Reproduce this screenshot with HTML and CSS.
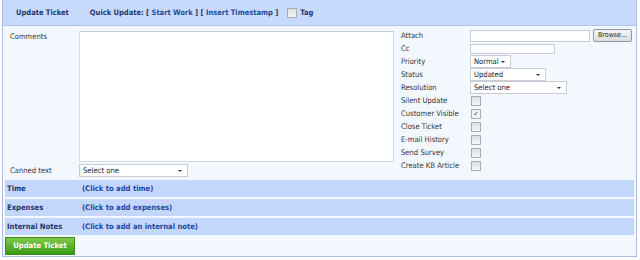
FILE: index.html
```html
<!DOCTYPE html>
<html>
<head>
<meta charset="utf-8">
<link rel="stylesheet" href="styles.css">
</head>
<body>
<div class="panel">
  <div class="head">
    <span class="head-title">Update Ticket</span>
    <span class="quick">Quick Update: [ <span class="qlink">Start Work</span> ] [ <span class="qlink">Insert Timestamp</span> ]</span>
    <span class="cb"></span>
    <span class="tag">Tag</span>
  </div>
  <div class="main">
    <div class="left">
      <div class="lrow comments-row">
        <span class="lab">Comments</span>
        <div class="textarea"></div>
      </div>
      <div class="lrow canned-row">
        <span class="lab">Canned text</span>
        <div class="sel sel-canned">Select one<span class="arr"></span></div>
      </div>
    </div>
    <div class="right">
      <span class="lab">Attach</span>
      <div class="field attach"><div class="input in-attach"></div><div class="browse">Browse...</div></div>
      <span class="lab">Cc</span>
      <div class="field"><div class="input in-cc"></div></div>
      <span class="lab">Priority</span>
      <div class="field"><div class="sel sel-pri">Normal<span class="arr"></span></div></div>
      <span class="lab">Status</span>
      <div class="field"><div class="sel sel-status">Updated<span class="arr"></span></div></div>
      <span class="lab">Resolution</span>
      <div class="field"><div class="sel sel-res">Select one<span class="arr"></span></div></div>
      <span class="lab">Silent Update</span>
      <div class="field"><span class="cb"></span></div>
      <span class="lab">Customer Visible</span>
      <div class="field"><span class="cb checked">✓</span></div>
      <span class="lab">Close Ticket</span>
      <div class="field"><span class="cb"></span></div>
      <span class="lab">E-mail History</span>
      <div class="field"><span class="cb"></span></div>
      <span class="lab">Send Survey</span>
      <div class="field"><span class="cb"></span></div>
      <span class="lab">Create KB Article</span>
      <div class="field"><span class="cb"></span></div>
    </div>
  </div>
  <div class="bar"><span class="bar-title">Time</span><span class="bar-link">(Click to add time)</span></div>
  <div class="bar"><span class="bar-title">Expenses</span><span class="bar-link">(Click to add expenses)</span></div>
  <div class="bar"><span class="bar-title">Internal Notes</span><span class="bar-link">(Click to add an internal note)</span></div>
  <div class="foot"><div class="btn">Update Ticket</div></div>
</div>
</body>
</html>
```

FILE: styles.css
```css
html, body {
  margin: 0;
  padding: 0;
  background: #ffffff;
}
body {
  padding: 0 3px 0 2px;
  font-family: "DejaVu Sans Condensed", "DejaVu Sans", sans-serif;
  font-size: 8px;
  color: #333333;
}
.panel {
  width: 633px;
  height: 256px;
  border: 1px solid #a9bfe8;
  border-top: none;
  background: #f3f7fe;
  display: flex;
  flex-direction: column;
}
.head {
  height: 25px;
  background: #c8dafc;
  border-bottom: 1px solid #adc3ec;
  display: flex;
  align-items: center;
  font-weight: bold;
  font-size: 7.5px;
  color: #1c3671;
}
.head-title { margin-left: 13px; }
.quick { margin-left: 21px; }
.qlink { color: #214aa0; }
.head .cb { margin-left: 9px; }
.tag { margin-left: 3px; }

.cb {
  display: inline-block;
  width: 8px;
  height: 8px;
  border: 1px solid #a8adb5;
  background: linear-gradient(#dcdfe3, #f4f5f6);
  font-size: 7px;
  line-height: 8px;
  text-align: center;
  color: #2c3c7a;
}
.cb.checked { background: #f3f4f6; }

.main {
  display: flex;
  padding-top: 3px;
  height: 149px;
}
.left {
  display: flex;
  flex-direction: column;
  gap: 2px;
  padding-top: 2px;
}
.lrow {
  display: flex;
}
.lab {
  display: block;
  font-size: 7.6px;
  color: #333333;
}
.left .lab {
  width: 69px;
  padding-left: 7px;
}
.comments-row .lab { padding-top: 1px; }
.textarea {
  width: 313px;
  height: 129px;
  background: #ffffff;
  border: 1px solid #d3dae6;
  border-top-color: #c4ccdb;
}
.canned-row { align-items: center; }
.sel {
  position: relative;
  box-sizing: border-box;
  height: 13px;
  background: #ffffff;
  border: 1px solid #c7ccd6;
  padding-left: 3px;
  font-size: 7.6px;
  line-height: 11px;
  color: #222222;
}
.arr {
  position: absolute;
  right: 5px;
  top: 5px;
  width: 0;
  height: 0;
  border-left: 2px solid transparent;
  border-right: 2px solid transparent;
  border-top: 2px solid #333333;
}
.sel-canned { width: 109px; }
.sel-pri { width: 41px; }
.sel-status { width: 76px; }
.sel-res { width: 97px; }

.right {
  margin-left: 6px;
  display: grid;
  grid-template-columns: 70px 170px;
  grid-auto-rows: 13px;
  align-items: center;
}
.right .lab { padding-left: 1px; }
.field {
  display: flex;
  align-items: center;
}
.input {
  box-sizing: border-box;
  background: #ffffff;
  border: 1px solid #c7ccd6;
}
.in-attach { width: 120px; height: 12px; }
.in-cc { width: 85px; height: 10px; }
.browse {
  margin-left: 3px;
  box-sizing: border-box;
  width: 39px;
  height: 13px;
  border: 1px solid #8f959c;
  border-radius: 2px;
  background: linear-gradient(#f6f6f6, #dcdcdc);
  font-size: 7px;
  line-height: 11px;
  text-align: center;
  color: #222222;
}
.field .cb { margin-left: 1px; }

.bar {
  margin: 2px 2px 0 2px;
  height: 17px;
  background: #c3d6fb;
  display: flex;
  align-items: center;
  font-weight: bold;
  font-size: 7.6px;
}
.bar-title {
  width: 75px;
  padding-left: 2px;
  color: #1c3671;
}
.bar-link { color: #1f48a0; }
.foot {
  padding: 2px 0 0 2px;
}
.btn {
  box-sizing: border-box;
  width: 70px;
  height: 18px;
  background: linear-gradient(#7ccb4a, #3d9817);
  border: 1px solid #3c8b1c;
  color: #ffffff;
  font-weight: bold;
  font-size: 7.6px;
  line-height: 16px;
  text-align: center;
}
```
